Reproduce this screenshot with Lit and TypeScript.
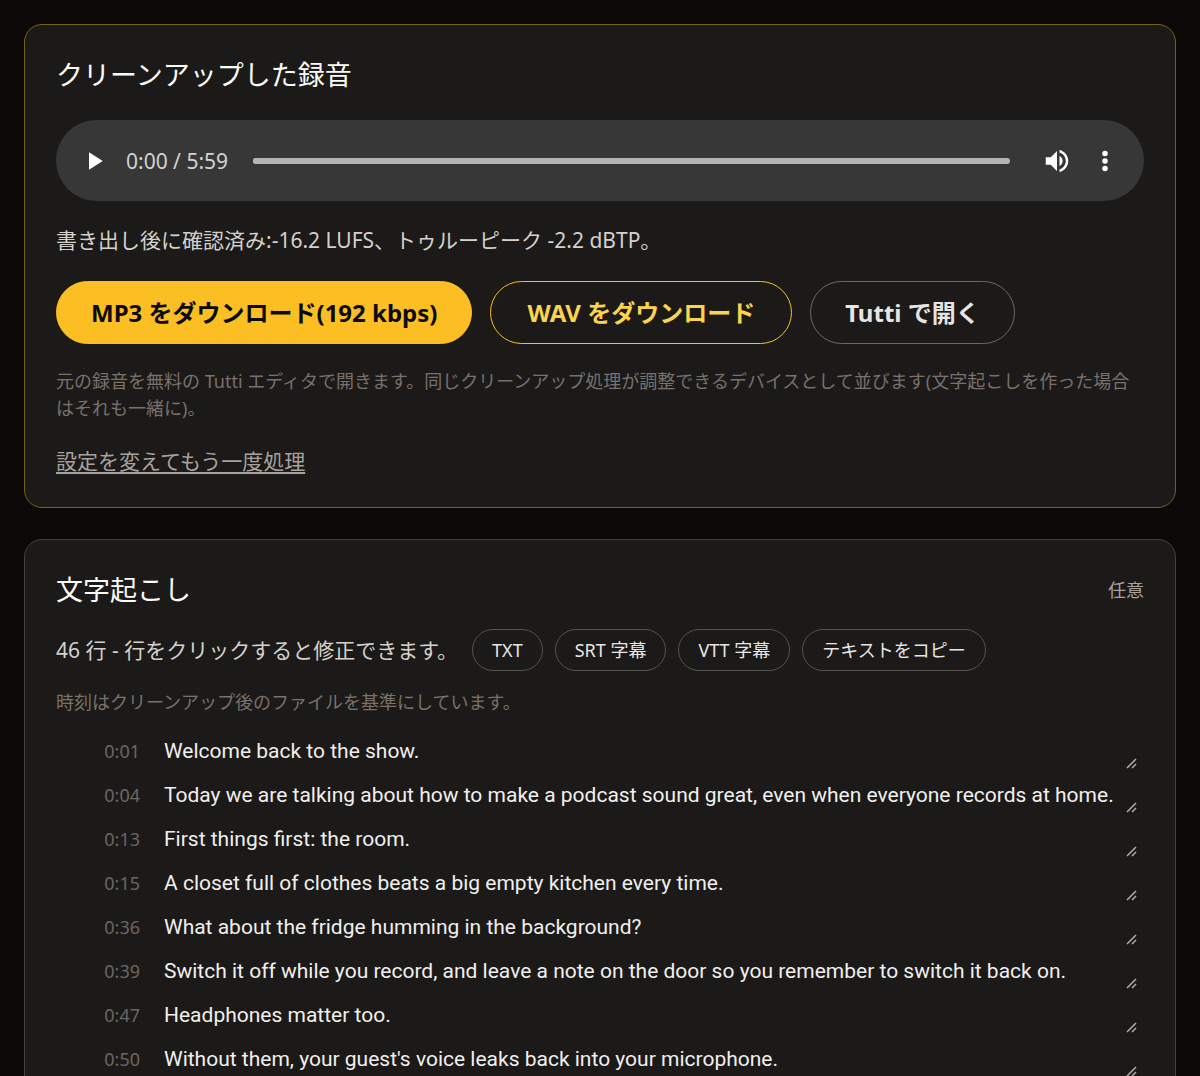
import { LitElement, html, css } from "lit";
import { customElement, property, state } from "lit/decorators.js";

interface Line {
  time: string;
  text: string;
}

const LINES: Line[] = [
  { time: "0:01", text: "Welcome back to the show." },
  { time: "0:04", text: "Today we are talking about how to make a podcast sound great, even when everyone records at home." },
  { time: "0:13", text: "First things first: the room." },
  { time: "0:15", text: "A closet full of clothes beats a big empty kitchen every time." },
  { time: "0:36", text: "What about the fridge humming in the background?" },
  { time: "0:39", text: "Switch it off while you record, and leave a note on the door so you remember to switch it back on." },
  { time: "0:47", text: "Headphones matter too." },
  { time: "0:50", text: "Without them, your guest's voice leaks back into your microphone." },
];

const base = css`
  * {
    box-sizing: border-box;
    margin: 0;
  }
  button,
  input,
  textarea {
    font: inherit;
    color: inherit;
  }
  button {
    cursor: pointer;
    background: none;
    border: 0;
    padding: 0;
  }
`;

@customElement("audio-player")
export class AudioPlayer extends LitElement {
  @property() duration = "";
  @state() private position = 0;

  static styles = [
    base,
    css`
      :host {
        display: block;
      }
      .player {
        display: flex;
        align-items: center;
        height: 81px;
        padding: 0 24px 0 23px;
        border-radius: 41px;
        background: #373737;
        color: #fff;
      }
      .icon {
        display: block;
        width: 30px;
        height: 30px;
        fill: currentColor;
      }
      .time {
        margin: 0 25px 0 17px;
        font-size: 21px;
        line-height: 30px;
        color: #d2d2d0;
        white-space: nowrap;
      }
      .seek {
        flex: 1;
        min-width: 0;
        height: 24px;
        margin: 0 32px 0 0;
        appearance: none;
        background: none;
      }
      .seek::-webkit-slider-runnable-track {
        height: 6px;
        border-radius: 3px;
        background: #b4b4b4;
      }
      .seek::-webkit-slider-thumb {
        appearance: none;
        width: 6px;
        height: 6px;
        border-radius: 3px;
        background: #b4b4b4;
      }
      .more {
        margin-left: 18px;
      }
    `,
  ];

  render() {
    return html`
      <div class="player">
        <button aria-label="再生">
          <svg class="icon" viewBox="0 0 24 24"><path d="M8 5v14l11-7z" /></svg>
        </button>
        <span class="time">0:00 / ${this.duration}</span>
        <input
          class="seek"
          type="range"
          min="0"
          max="359"
          aria-label="再生位置"
          .value=${String(this.position)}
          @input=${(e: Event) => (this.position = Number((e.target as HTMLInputElement).value))}
        />
        <button aria-label="ミュート">
          <svg class="icon" viewBox="0 0 24 24">
            <path
              d="M3 9v6h4l5 5V4L7 9H3zm13.5 3c0-1.77-1.02-3.29-2.5-4.03v8.05c1.48-.73 2.5-2.25 2.5-4.02zM14 3.23v2.06c2.89.86 5 3.54 5 6.71s-2.11 5.85-5 6.71v2.06c4.01-.91 7-4.49 7-8.77s-2.99-7.86-7-8.77z"
            />
          </svg>
        </button>
        <button class="more" aria-label="その他">
          <svg class="icon" viewBox="0 0 24 24">
            <circle cx="12" cy="6" r="2.2" />
            <circle cx="12" cy="12" r="2.2" />
            <circle cx="12" cy="18" r="2.2" />
          </svg>
        </button>
      </div>
    `;
  }
}

@customElement("transcript-line")
export class TranscriptLine extends LitElement {
  @property() time = "";
  @property() text = "";

  static styles = [
    base,
    css`
      :host {
        display: block;
      }
      .row {
        display: grid;
        grid-template-columns: 84px 1fr;
        align-items: center;
        column-gap: 12px;
        padding-right: 6px;
      }
      .time {
        justify-self: end;
        font-size: 18px;
        line-height: 38px;
        color: #6b6661;
      }
      .field {
        position: relative;
        display: flex;
      }
      .text {
        flex: 1;
        min-width: 0;
        height: 38px;
        padding: 4px 12px;
        border: 0;
        background: none;
        resize: none;
        overflow: hidden;
        font-family: Roboto, "Noto Sans CJK JP", sans-serif;
        font-size: 21px;
        line-height: 30px;
        color: #f0efed;
      }
      .grip {
        position: absolute;
        right: 1px;
        bottom: 1px;
        width: 12px;
        height: 12px;
        stroke: #b0aeab;
        stroke-width: 1.5;
        pointer-events: none;
      }
    `,
  ];

  render() {
    return html`
      <div class="row">
        <label class="time" for="text">${this.time}</label>
        <div class="field">
          <textarea class="text" id="text" rows="1" spellcheck="false" .value=${this.text}></textarea>
          <svg class="grip" viewBox="0 0 12 12"><path d="M2 11L11 2M7 11L11 7" /></svg>
        </div>
      </div>
    `;
  }
}

@customElement("app-root")
export class AppRoot extends LitElement {
  static styles = [
    base,
    css`
      :host {
        display: block;
        height: 100vh;
        overflow: hidden;
        background: #0a0908;
        color: #d4d1cd;
        font-family: "Noto Sans", "Noto Sans CJK JP", sans-serif;
        font-size: 21px;
        line-height: 30px;
      }
      .page {
        display: flex;
        flex-direction: column;
        gap: 31px;
        padding: 24px;
      }
      .card {
        padding: 30px 31px;
        border: 1px solid #44423f;
        border-radius: 18px;
        background: #1b1a18;
      }
      .result {
        border-color: #7b5f1e;
      }
      .title {
        font-size: 27px;
        line-height: 40px;
        font-weight: 400;
        color: #fafaf9;
      }
      .player {
        margin-top: 25px;
      }
      .levels {
        margin-top: 24px;
      }
      .actions {
        display: flex;
        flex-wrap: wrap;
        gap: 18px;
        margin-top: 26px;
      }
      .action {
        height: 63px;
        padding: 0 34px;
        border: 1px solid #6b6967;
        border-radius: 32px;
        font-size: 24px;
        font-weight: 700;
        color: #e7e5e4;
      }
      .primary {
        border-color: #fbbf24;
        background: #fbbf24;
        color: #0c0a09;
      }
      .outline {
        padding: 0 36px;
        border-color: #fbbf24;
        color: #fcd34d;
      }
      .note {
        font-size: 18px;
        line-height: 27px;
        color: #78716c;
      }
      .result .note {
        margin-top: 24px;
      }
      .redo {
        margin-top: 23px;
        line-height: 32px;
      }
      .link {
        color: #a8a29e;
        text-decoration: underline;
        text-underline-offset: 3px;
      }
      .head {
        display: flex;
        justify-content: space-between;
        align-items: center;
      }
      .optional {
        font-size: 18px;
        color: #a8a29e;
      }
      .tools {
        display: flex;
        flex-wrap: wrap;
        align-items: center;
        gap: 12px;
        margin: 19px 0 18px;
      }
      .count {
        margin-right: 2px;
      }
      .chip {
        height: 42px;
        padding: 0 19px;
        border: 1px solid #54514e;
        border-radius: 21px;
        font-size: 18px;
        color: #e7e5e4;
      }
      .lines {
        display: flex;
        flex-direction: column;
        gap: 6px;
        margin: 16px 0 0;
        padding: 0;
        list-style: none;
      }
    `,
  ];

  render() {
    return html`
      <main class="page">
        <section class="card result">
          <h2 class="title">クリーンアップした録音</h2>
          <audio-player class="player" duration="5:59"></audio-player>
          <p class="levels">書き出し後に確認済み:-16.2 LUFS、トゥルーピーク -2.2 dBTP。</p>
          <div class="actions">
            <button class="action primary">MP3 をダウンロード(192 kbps)</button>
            <button class="action outline">WAV をダウンロード</button>
            <button class="action">Tutti で開く</button>
          </div>
          <p class="note">
            元の録音を無料の Tutti エディタで開きます。同じクリーンアップ処理が調整できるデバイスとして並びます(文字起こしを作った場合はそれも一緒に)。
          </p>
          <p class="redo"><a class="link" href="#settings">設定を変えてもう一度処理</a></p>
        </section>
        <section class="card">
          <div class="head">
            <h2 class="title">文字起こし</h2>
            <span class="optional">任意</span>
          </div>
          <div class="tools">
            <span class="count">46 行 - 行をクリックすると修正できます。</span>
            ${["TXT", "SRT 字幕", "VTT 字幕", "テキストをコピー"].map(
              (label) => html`<button class="chip">${label}</button>`
            )}
          </div>
          <p class="note">時刻はクリーンアップ後のファイルを基準にしています。</p>
          <ul class="lines">
            ${LINES.map(
              (l) => html`<li><transcript-line .time=${l.time} .text=${l.text}></transcript-line></li>`
            )}
          </ul>
        </section>
      </main>
    `;
  }
}
